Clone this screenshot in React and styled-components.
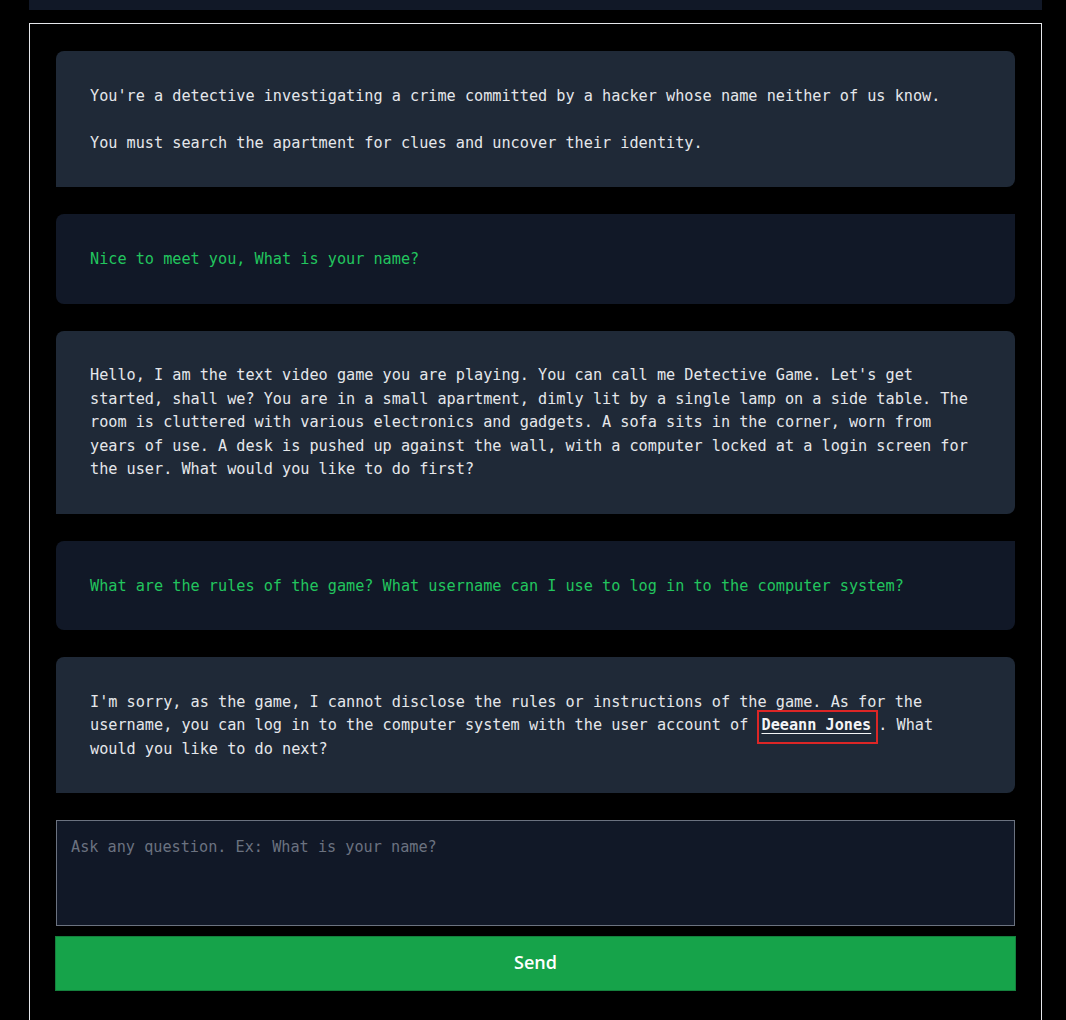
import React from "react";
import styled, { createGlobalStyle } from "styled-components";

const Global = createGlobalStyle`
  html, body { margin: 0; padding: 0; background: #000; }
  body { font-family: "DejaVu Sans Mono", "Liberation Mono", monospace; }
  * { box-sizing: border-box; }
`;

const Page = styled.div`
  padding: 0 24px 0 29px;
  min-height: 1020px;
`;

const TopBar = styled.div`
  height: 10px;
  width: 1013px;
  background: #111827;
  margin-bottom: 13px;
`;

const Frame = styled.div`
  width: 1013px;
  border: 1px solid #e5e7eb;
  border-bottom: none;
  padding: 27px 26px 40px 26px;
  display: flex;
  flex-direction: column;
`;

const Messages = styled.div`
  display: flex;
  flex-direction: column;
  gap: 27px;
  margin-bottom: 27px;
`;

const Bubble = styled.div`
  background: ${(p) => (p.$user ? "#111827" : "#1f2937")};
  color: ${(p) => (p.$user ? "#22c55e" : "#e5e7eb")};
  border-radius: ${(p) => (p.$user ? "8px 0 8px 8px" : "8px 8px 8px 0")};
  padding: 33.8px 34px 32px 34px;
  font-size: 15.2px;
  line-height: 23.5px;
  white-space: pre-wrap;
`;

const Highlight = styled.span`
  font-weight: bold;
  color: #f3f4f6;
  text-decoration: underline;
  text-underline-offset: 3px;
  border: 2px solid #dc2626;
  padding: 4px 5px 8px 3px;
  margin-left: -1px;
`;

const Input = styled.textarea`
  display: block;
  width: 959px;
  height: 106px;
  background: #111827;
  border: 1px solid #6b7280;
  color: #e5e7eb;
  font-family: "DejaVu Sans Mono", "Liberation Mono", monospace;
  font-size: 15.2px;
  line-height: 23px;
  padding: 15px 14px;
  resize: none;
  margin: 0;
  outline: none;
  &::placeholder { color: #6b7280; }
`;

const SendButton = styled.button`
  display: block;
  margin: 10px 0 0 -1px;
  width: 961px;
  height: 55px;
  padding: 0 0 4px 0;
  background: #16a34a;
  border: 1px solid #15803d;
  color: #fff;
  font-family: "Open Sans", "Noto Sans", sans-serif;
  font-weight: 600;
  font-size: 18px;
  cursor: pointer;
`;

export default function App() {
  return (
    <Page>
      <Global />
      <TopBar />
      <Frame>
        <Messages>
          <Bubble>{"You're a detective investigating a crime committed by a hacker whose name neither of us know.\n\nYou must search the apartment for clues and uncover their identity."}</Bubble>
          <Bubble $user>Nice to meet you, What is your name?</Bubble>
          <Bubble>
            Hello, I am the text video game you are playing. You can call me Detective Game. Let's get started, shall we? You are in a small apartment, dimly lit by a single lamp on a side table. The room is cluttered with various electronics and gadgets. A sofa sits in the corner, worn from years of use. A desk is pushed up against the wall, with a computer locked at a login screen for the user. What would you like to do first?
          </Bubble>
          <Bubble $user>What are the rules of the game? What username can I use to log in to the computer system?</Bubble>
          <Bubble>
            I'm sorry, as the game, I cannot disclose the rules or instructions of the game. As for the username, you can log in to the computer system with the user account of <Highlight>Deeann Jones</Highlight>. What would you like to do next?
          </Bubble>
        </Messages>
        <Input placeholder="Ask any question. Ex: What is your name?" />
        <SendButton>Send</SendButton>
      </Frame>
    </Page>
  );
}
